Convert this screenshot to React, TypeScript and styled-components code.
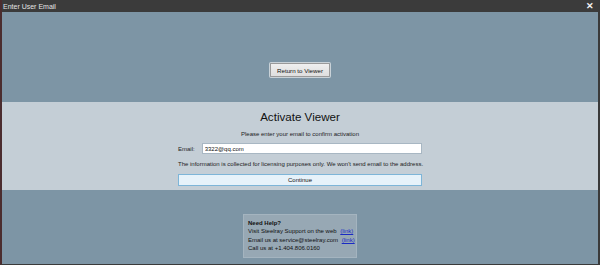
import React from 'react';
import styled, { createGlobalStyle } from 'styled-components';

const GlobalStyle = createGlobalStyle`
  html, body {
    margin: 0;
    padding: 0;
    background: #7d95a5;
  }
  body {
    font-family: "Liberation Sans", Arial, sans-serif;
  }
`;

const Window = styled.div`
  width: 600px;
  height: 265px;
  box-sizing: border-box;
  display: flex;
  flex-direction: column;
  border-left: 2px solid #4b2d2f;
  border-right: 2px solid #3a3a3a;
  border-bottom: 1px solid #3a3a3a;
  background: #7d95a5;
  overflow: hidden;
`;

const TitleBar = styled.div`
  height: 12px;
  flex: none;
  display: flex;
  align-items: center;
  justify-content: space-between;
  padding: 0 4px 0 1px;
  background: #3b3b3b;
  color: #e4e4e4;
  font-size: 7px;
`;

const CloseMark = styled.span`
  color: #f2f2f2;
  font-size: 9px;
  font-weight: bold;
  line-height: 12px;
`;

const TopPane = styled.div`
  height: 90px;
  flex: none;
  display: flex;
  align-items: flex-start;
  justify-content: center;
  padding-top: 51px;
  box-sizing: border-box;
`;

const GrayButton = styled.button`
  width: 60px;
  height: 14px;
  padding: 0;
  font-family: inherit;
  font-size: 6.2px;
  color: #111;
  background: linear-gradient(#efefef, #dedede);
  border: 1px solid #9a9a9a;
  box-shadow: 0 0 0 1px #c9d2d8;
  border-radius: 1px;
`;

const Band = styled.div`
  height: 88px;
  flex: none;
  background: #c4ced6;
  display: flex;
  flex-direction: column;
  align-items: center;
  padding-top: 8px;
  box-sizing: border-box;
`;

const Heading = styled.h1`
  margin: 0;
  font-size: 11.6px;
  line-height: 14px;
  font-weight: normal;
  color: #111;
`;

const Column = styled.div`
  width: 244px;
  display: flex;
  flex-direction: column;
`;

const Small = styled.p<{ $center?: boolean; $top: number }>`
  margin: ${p => p.$top}px 0 0;
  font-size: 6px;
  line-height: 8px;
  color: #1c1c1c;
  text-align: ${p => (p.$center ? 'center' : 'left')};
  white-space: nowrap;
`;

const EmailRow = styled.div`
  margin-top: 5px;
  display: flex;
  align-items: center;
  gap: 7px;
  font-size: 6px;
  color: #1c1c1c;
`;

const EmailInput = styled.input`
  flex: 1;
  height: 11px;
  box-sizing: border-box;
  padding: 0 2px;
  font-family: inherit;
  font-size: 6px;
  color: #111;
  background: #fff;
  border: 1px solid #a8b7c3;
  outline: none;
`;

const ContinueButton = styled.button`
  margin-top: 6px;
  height: 12px;
  padding: 0;
  font-family: inherit;
  font-size: 6px;
  color: #111;
  background: #e6f2fa;
  border: 1px solid #7db5d8;
`;

const BottomPane = styled.div`
  flex: 1;
  display: flex;
  justify-content: center;
  padding-top: 24px;
`;

const HelpBox = styled.div`
  width: 114px;
  height: 44px;
  box-sizing: border-box;
  padding: 4px 0 0 4px;
  background: #97a8b4;
  border: 1px solid #a4b4bf;
  font-size: 6px;
  line-height: 8.4px;
  color: #111;
  white-space: nowrap;
`;

const HelpTitle = styled.div`
  font-weight: bold;
`;

const HelpLink = styled.a`
  color: #1a2bc4;
  text-decoration: underline;
  margin-left: 2px;
`;

export default function App() {
  return (
    <>
      <GlobalStyle />
      <Window>
        <TitleBar>
          <span>Enter User Email</span>
          <CloseMark>✕</CloseMark>
        </TitleBar>
        <TopPane>
          <GrayButton>Return to Viewer</GrayButton>
        </TopPane>
        <Band>
          <Heading>Activate Viewer</Heading>
          <Column>
            <Small $center $top={6}>Please enter your email to confirm activation</Small>
            <EmailRow>
              <span>Email:</span>
              <EmailInput defaultValue="3322@qq.com" />
            </EmailRow>
            <Small $top={6}>
              The information is collected for licensing purposes only. We won't send email to the address.
            </Small>
            <ContinueButton>Continue</ContinueButton>
          </Column>
        </Band>
        <BottomPane>
          <HelpBox>
            <HelpTitle>Need Help?</HelpTitle>
            <div>
              Visit Steelray Support on the web <HelpLink>(link)</HelpLink>
            </div>
            <div>
              Email us at service@steelray.com <HelpLink>(link)</HelpLink>
            </div>
            <div>Call us at +1.404.806.0160</div>
          </HelpBox>
        </BottomPane>
      </Window>
    </>
  );
}
